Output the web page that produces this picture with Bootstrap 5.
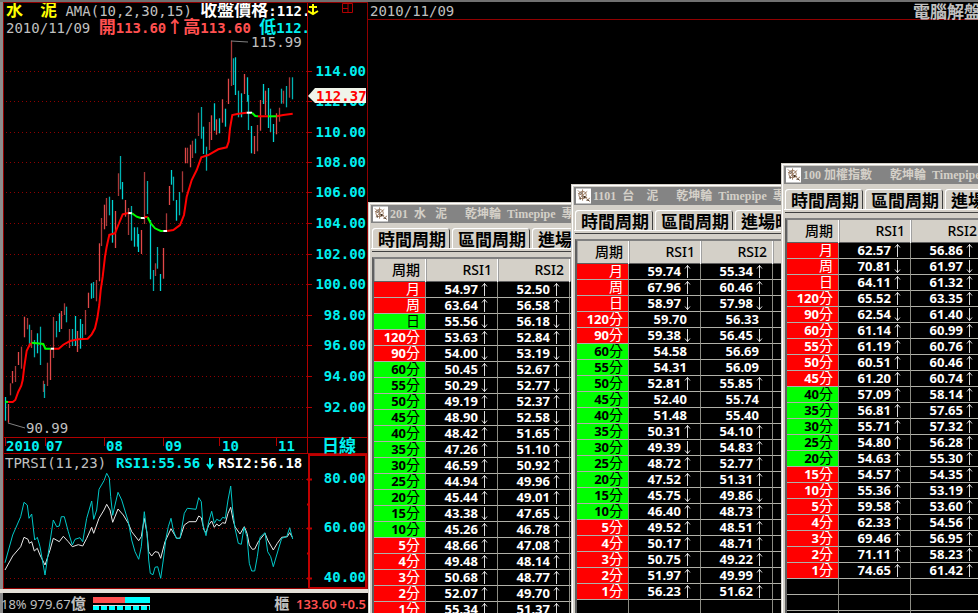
<!DOCTYPE html>
<html lang="zh-Hant">
<head>
<meta charset="utf-8">
<meta name="viewport" content="width=device-width, initial-scale=1">
<title>水泥 乾坤輪 Timepipe</title>
<link href="https://cdn.jsdelivr.net/npm/bootstrap@5.3.0/dist/css/bootstrap.min.css" rel="stylesheet">
<style>
  :root { --face: #d4d0c8; --wire: #900000; --aqua: #00f0f0; --coral: #ff5050; --mist: #c0c0c0; }
  body { background: #000; color: var(--mist); font: 14px/17px "DejaVu Sans Mono", "Noto Sans CJK TC", monospace; border-top: 2px solid #707070; }
  .zh { font: 700 17px/17px "Noto Sans CJK TC", sans-serif; }
  .quote-side { flex: 0 0 368px; border-left: 3px solid #8c8c8c; }
  .quote-side svg { display: block; }
  .quote-frame { border: 1px solid var(--wire); border-bottom: 0; }
  .quote-head { flex: 0 0 304px; border-right: 1px solid #b00000; padding-left: 2px; height: 34px; }
  .quote-head .zh { line-height: 12px; }
  .quote-head div { height: 17px; }
  .aqua { color: var(--aqua); } .coral { color: var(--coral); } .sun { color: #ff0; }
  .grid-line { stroke: #900000; stroke-dasharray: 1 3; fill: none; }
  .axis { stroke: #b00000; fill: none; }
  .lab { font-weight: 700; fill: var(--aqua); text-anchor: end; }
  .mon { font-weight: 700; fill: var(--aqua); }
  .tag { fill: #f00; }
  .splitter { height: 8px; background: linear-gradient(#e4e0d8 0 4px, #9a9a9a 4px 5px, #303030 5px 7px, #fff 7px); margin-left: -3px; }
  .status { font: 13px/18px "Noto Sans", "Noto Sans CJK TC", sans-serif; margin-left: -2px; padding: 0 2px 0 0; }
  .status > span { padding-top: 2px; }
  .status .zh { font-size: 15px; line-height: 12px; }
  .meter { flex: 0 0 57px; margin-left: 7px; height: 13px; }
  .meter-sell { flex: 0 0 32px; background: var(--coral); }
  .meter-buy { background: #0ff; }
  .meter-top { height: 6px; }
  .meter-ticks { height: 5px; margin-top: 2px; background: repeating-linear-gradient(90deg, #0ff 0 6px, #000 6px 8px); border-top: 1px solid #ddd; }
  .desk-head { border-bottom: 1px solid var(--wire); height: 18px; padding: 1px 0 0 2px; }
  .desk-head .zh { margin-right: -3px; line-height: 15px; }
  .tool-win { position: absolute; width: 460px; height: 600px; background: var(--face); border: 1px solid var(--face); box-shadow: inset 1px 1px #fff; padding: 2px 2px 0; font-family: "Noto Sans", "Noto Sans CJK TC", sans-serif; }
  .win-a { left: 0; top: 200px; } .win-b { left: 203px; top: 182px; } .win-c { left: 413px; top: 161px; }
  .win-title { height: 18px; background: #848484; color: var(--face); font: 700 12px/18px "Liberation Serif", "Noto Sans CJK TC", serif; padding-left: 2px; gap: 2px; }
  .win-title .who { margin-right: 16px; }
  .win-tabs { padding: 5px 0 0 1px; border-bottom: 1px solid #fff; margin-bottom: 3px; }
  .win-tabs button { border: 0; background: var(--face); color: #000; padding: 0 4px 0 6px; height: 20px; box-shadow: inset 1px 1px #fff, inset -1px 0 #404040; border-radius: 3px 3px 0 0; margin-right: 2px; }
  .win-body { border-top: 2px solid #808080; box-shadow: 0 -5px var(--face), 0 -6px #404040; margin-top: 8px; margin-left: 1px; border-left: 2px solid #606060; background: #000; }
  .rsi-grid { table-layout: fixed; width: 268px; border-collapse: separate; border-spacing: 0; color: #fff; margin: 0; font: 700 13px/15px "Noto Sans", "Noto Sans CJK TC", sans-serif; }
  .rsi-grid th, .rsi-grid td { padding: 0; text-align: right; }
  .rsi-grid thead th { background: var(--face); color: #000; height: 23px; font-size: 14px; font-weight: 500; padding: 0 5px 2px 0; border-right: 1px solid #fff; box-shadow: inset 0 -1px #606060, inset 1px 0 #a0a0a0; }
  .rsi-grid .unit { font-weight: 400; font-size: 14px; line-height: 8px; }
  .rsi-grid tbody th, .rsi-grid tbody td { height: 16px; border-bottom: 1px solid #b0b0a8; border-right: 1px solid #8c8c84; }
  .rsi-grid tbody th { padding-right: 5px; }
  .rsi-grid tbody td { padding-right: 9px; }
  .rsi-grid tbody .flat { padding-right: 13px; }
  .hot { background: #f00; color: #fff; } .calm { background: #0f0; color: #000; }
  .dir { display: inline-block; width: 9px; margin-left: 1px; height: 14px; vertical-align: top; }
</style>
</head>
<body class="vh-100 overflow-hidden d-flex">
<svg class="d-none">
  <symbol id="up" viewBox="0 0 9 14"><path d="M5.500 1V14M3 4.500L5.500 1.500L8 4.500" fill="none" stroke="#ddd"/></symbol>
  <symbol id="down" viewBox="0 0 9 14"><path d="M5.500 1V14M3 10.500L5.500 13.500L8 10.500" fill="none" stroke="#ddd"/></symbol>
  <symbol id="emblem" viewBox="0 0 16 16"><path fill="#fff" d="M0 0h16v16H0z"/><g fill="none" stroke="#9a7a60"><circle cx="7" cy="7" r="4"/><path d="M7 1v12M2 5l10 5M3 11l9-8M2 2l3 3M10 10l5 4M11 13l4-3"/></g><path fill="#403020" d="M5 4h1v2H5zM8 8h2v2H8zM4 10h1v2H4zM12 12h2v1h-2z"/></symbol>
</svg>

<aside class="quote-side d-flex flex-column">
  <section class="quote-frame">
    <div class="d-flex">
      <header class="quote-head text-nowrap overflow-hidden">
        <div><span class="zh sun">水　泥</span> AMA(10,2,30,15) <span class="zh text-white">收盤價格</span><b class="text-white">:112.</b></div>
        <div>2010/11/09 <span class="coral"><span class="zh">開</span><b>113.60</b><span class="zh">↑</span><span class="zh">高</span><b>113.60</b></span> <span class="aqua"><span class="zh">低</span><b>112.</b></span></div>
      </header>
      <svg width="58" height="14" viewBox="0 0 58 14"><path d="M5 1v10M1 4h8M0 8l5 3 5-3" stroke="#ff0" stroke-width="2" fill="none"/><path d="M34.500 .500h10v9h-10zM40 .500v9M34 5.500h6" stroke="#b00000" fill="none"/></svg>
    </div>
    <svg viewBox="4 37 363 417" role="img" aria-label="日線 K線圖">
      <g id="priceGrid"></g>
      <path class="axis" d="M307.500 37V454M4 437.500H367M4 453.500H367M5.500 438v8M45.500 438v8M104.500 438v8M163.500 438v8M219.500 438v8M276.500 438v8"/>
      <g id="candles"></g>
      <g id="average" fill="none" stroke-width="2"></g>
      <path d="M8 423L25 428M231 41L248 42" stroke="#808080" fill="none"/>
      <g fill="#c0c0c0"><text x="26" y="433">90.99</text><text x="251" y="47">115.99</text></g>
      <g class="mon"><text x="6" y="451">2010</text><text x="46" y="451">07</text><text x="106" y="451">08</text><text x="165" y="451">09</text><text x="222" y="451">10</text><text x="278" y="451">11</text><text class="zh" x="322" y="452">日線</text></g>
      <path d="M308 96L315 88H366V103H315Z" fill="#f0f5ea"/>
      <text class="tag fw-bold" x="316" y="101">112.37</text>
    </svg>
    <svg viewBox="4 454 363 135" role="img" aria-label="TPRSI">
      <path class="grid-line" d="M6 479.500H307M6 528.500H307M6 578.500H307"/>
      <path d="M309 455H366V588H309ZM307 479.500H312M307 528.500H312M307 578.500H312M307 504.500H310M307 553.500H310" stroke="#c00000" stroke-width="2" fill="none"/>
      <path d="M4 588.500H309" stroke="#900000"/>
      <g id="rsi" fill="none"></g>
      <text x="5" y="468" fill="#c0c0c0">TPRSI(11,23)</text>
      <text x="116" y="468" class="mon">RSI1:55.56</text>
      <path d="M210 458V467M207 464L210 468L213 464" stroke="#00f0f0" stroke-width="2" fill="none"/>
      <text x="218" y="468" fill="#fff" font-weight="700">RSI2:56.18</text>
      <g class="lab"><text x="366" y="483">80.00</text><text x="366" y="532">60.00</text><text x="366" y="582">40.00</text></g>
    </svg>
  </section>
  <div class="splitter"></div>
  <footer class="status d-flex align-items-start text-nowrap">
    <span>18% 979.67<span class="zh">億</span></span>
    <div class="meter mt-1"><div class="meter-top d-flex"><div class="meter-sell"></div><div class="meter-buy flex-fill"></div></div><div class="meter-ticks"></div></div>
    <span class="ms-auto"><span class="zh">櫃</span>&nbsp; <b class="coral fw-semibold">133.60 +0.5</b></span>
  </footer>
</aside>

<main class="flex-fill position-relative overflow-hidden">
  <div class="desk-head d-flex justify-content-between text-nowrap"><span>2010/11/09</span><span class="zh">電腦解盤</span></div>
  <div id="windows"></div>
</main>

<script src="https://cdn.jsdelivr.net/npm/bootstrap@5.3.0/dist/js/bootstrap.bundle.min.js"></script>
<script>
const periods = ['月','周','日','120分','90分','60分','55分','50分','45分','40分','35分','30分','25分','20分','15分','10分','5分','4分','3分','2分','1分'];
// Each reading is RSI1, RSI2, direction (one letter, or one per column): u rising, d falling, - unchanged.
const wins = [
 {cls:'win-a', who:'201 \u00a0水\u00a0\u00a0 泥', tone:'rrgrrgggggggggggrrrrr', v:
 '54.97 52.50 u,63.64 56.58 u,55.56 56.18 d,53.63 52.84 u,54.00 53.19 d,50.45 52.67 u,50.29 52.77 d,49.19 52.37 u,48.90 52.58 d,48.42 51.65 u,47.26 51.10 u,46.59 50.92 u,44.94 49.96 u,45.44 49.01 u,43.38 47.65 d,45.26 46.78 u,48.66 47.08 u,49.48 48.14 u,50.68 48.77 u,52.07 49.70 u,55.34 51.37 u'},
 {cls:'win-b', who:'1101 \u00a0台　泥', tone:'rrrrrgggggggggggrrrrr', v:
 '59.74 55.34 u,67.96 60.46 u,58.97 57.98 d,59.70 56.33 -,59.38 56.45 d,54.58 56.69 -,54.31 56.09 -,52.81 55.85 u,52.40 55.74 -,51.48 55.40 -,50.31 54.10 u,49.39 54.83 du,48.72 52.77 u,47.52 51.31 u,45.75 49.86 d,46.40 48.73 u,49.52 48.51 u,50.17 48.71 u,50.75 49.22 u,51.97 49.99 u,56.23 51.62 u'},
 {cls:'win-c', who:'100 加權指數', tone:'rrrrrrrrrgggggrrrrrrr', v:
 '62.57 56.86 u,70.81 61.97 d,64.11 61.32 u,65.52 63.35 u,62.54 61.40 d,61.14 60.99 u,61.19 60.76 u,60.51 60.46 u,61.20 60.74 u,57.09 58.14 u,56.81 57.65 u,55.71 57.32 u,54.80 56.28 u,54.63 55.30 u,54.57 54.35 u,55.36 53.19 u,59.58 53.60 u,62.33 54.56 u,69.46 56.95 u,71.11 58.23 u,74.65 61.42 u'}];
const cell = (n, d) => d === '-' ? `<td class="flat">${n}</td>` : `<td>${n}<svg class="dir"><use href="#${d === 'u' ? 'up' : 'down'}"/></svg></td>`;
document.getElementById('windows').innerHTML = wins.map(w => {
  const rows = w.v.split(',').map((r, i) => {
    const [a, b, d] = r.split(' ');
    return `<tr><th scope="row" class="${w.tone[i] === 'r' ? 'hot' : 'calm'}">${periods[i].replace(/[^\d]/, '<span class="unit">$&</span>')}</th>${cell(a, d[0])}${cell(b, d[d.length - 1])}<td></td></tr>`;
  }).join('') + '<tr><td></td><td></td><td></td><td></td></tr>'.repeat(3);
  return `<section class="tool-win ${w.cls} text-nowrap overflow-hidden">
    <div class="win-title d-flex align-items-center"><svg width="15" height="16"><use href="#emblem"/></svg><span class="who">${w.who}</span><span>乾坤輪&nbsp; Timepipe&nbsp; 專用</span></div>
    <div class="win-tabs d-flex"><button type="button" class="zh">時間周期</button><button type="button" class="zh">區間周期</button><button type="button" class="zh">進場時機</button></div>
    <div class="win-body"><table class="rsi-grid"><colgroup><col width="52"><col width="72"><col width="72"><col width="72"></colgroup>
    <thead><tr><th scope="col">周期</th><th scope="col">RSI1</th><th scope="col">RSI2</th><th></th></tr></thead><tbody>${rows}</tbody></table></div></section>`;
}).join('');

// Chart series are stored in thirds of a pixel.
const px = n => Math.round(n / 3 * 10) / 10;
const line = s => 'M' + s.split(' ').map(p => p.split(',').map(px).join(' ')).join('L');
const levels = [72,102,133,163,193,224,255,285,316,346,377,408];
document.getElementById('priceGrid').innerHTML = levels.map((y, i) =>
  `<path class="grid-line" d="M6 ${y - .5}H307"/><path class="axis" d="M307 ${y - .5}H312"/><text class="lab" x="366" y="${y + 4}">${114 - 2 * i}.00</text>`).join('');
const bars = 'c16,1191,1262 r24,1212,1268 r32,1150,1186 r38,1113,1150 r46,1098,1146 r55,1056,1095 r64,1040,1106 r72,950,1012 r81,954,988 c87,974,1040 r95,990,1044 c103,1020,1072 c112,1000,1060 c121,980,1095 r129,1142,1176 c134,1152,1194 r143,1088,1158 r152,1046,1140 r160,951,1074 c169,963,1012 c178,940,996 r183,933,987 r192,910,945 c200,920,967 r209,987,1044 c217,987,1038 c226,948,1038 r232,993,1056 c240,957,1046 c248,972,1016 r257,930,1004 r266,878,924 c275,850,896 c281,846,894 r289,840,904 r297,730,844 r305,654,738 r313,614,688 r320,594,678 c328,590,646 c337,600,728 r346,633,744 r354,520,588 c362,468,568 c368,546,598 r376,600,650 r386,624,705 c394,618,722 c403,682,740 c411,682,740 c416,702,756 r425,690,762 r433,516,672 c442,543,642 c450,660,838 c459,810,873 r465,790,828 c473,741,806 c482,822,873 r491,744,836 r499,640,692 r507,558,615 c513,510,554 c521,530,602 c530,600,662 c539,576,646 r548,514,576 r556,443,490 r562,443,490 r570,434,502 r578,422,474 c587,416,460 r596,338,408 c604,321,416 c611,380,462 c618,440,512 r627,366,450 r635,346,420 c643,310,392 r650,358,404 c659,355,400 r667,298,368 c675,326,380 r684,236,312 r693,122,258 c699,175,255 c707,172,285 c716,272,352 c724,280,352 r733,222,282 c741,232,305 c746,285,390 c755,378,460 r764,408,462 r773,375,454 r781,300,392 c789,252,312 r796,272,345 c804,264,384 c812,326,396 c821,372,426 r829,340,403 r837,323,365 c843,266,311 r851,272,311 c860,258,322 r869,232,293 c878,232,298';
document.getElementById('candles').innerHTML = bars.split(' ').map((b, i) => {
  const [x, y1, y2] = b.slice(1).split(',').map(Number);
  const ink = b[0] === 'c' ? (i % 2 ? '#00b0b0' : '#00d4d4') : (i % 2 ? '#e04848' : '#a83838');
  return `<path d="M${Math.floor(x / 3) + .5} ${px(y1)}V${px(y2)}" stroke="${ink}" stroke-width="1.300"/>`;
}).join('');
const avg = [['#0f0','16,1205 24,1206'],['#f00','24,1206 38,1206 46,1200 55,1175 64,1157 68,1140 73,1100 80,1052 90,1032 95,1030'],['#0f0','95,1028 130,1032 136,1046 152,1046'],['#fff','152,1046 162,1046'],['#f00','162,1046 176,1046 190,1034 210,1023 235,1018 263,1016 275,1003 285,985 292,955 298,915 302,870 308,830 315,770 320,740 328,704 345,700 355,675 368,643 385,639'],['#fff','385,639 396,640'],['#0f0','396,640 410,650 422,654'],['#fff','422,654 434,654'],['#f00','434,651 443,651'],['#0f0','443,652 452,670 465,685 482,693 490,693'],['#fff','490,693 502,693'],['#f00','502,693 520,690 540,675 552,645 560,590 575,540 590,510 604,472 625,465 655,448 680,442 686,425 690,385 697,345 715,341 740,338'],['#fff','740,338 756,338'],['#0f0','756,338 766,348 774,349'],['#f00','774,349 804,349'],['#0f0','804,349 830,349'],['#f00','830,349 850,345 878,341']];
document.getElementById('average').innerHTML = avg.map(([c, s]) => `<path stroke="${c}" d="${line(s)}"/>`).join('');
const rsi = [['#e8e8e8','15,360 38,318 62,290 72,262 84,268 88,280 95,275 103,303 112,295 120,315 135,345 150,300 160,265 178,275 190,259 205,275 217,290 235,284 248,288 260,265 275,232 281,250 297,205 312,180 320,163 330,180 338,217 354,177 370,195 385,220 395,245 416,272 424,260 433,205 441,250 446,305 455,318 465,305 475,307 482,325 495,275 513,236 530,265 540,265 553,225 567,215 588,215 596,198 604,203 612,240 618,248 626,225 635,213 643,232 650,222 657,228 668,218 676,220 684,190 692,172 700,212 705,230 720,252 733,230 741,250 748,285 757,298 764,297 775,275 795,250 803,270 820,300 832,280 845,262 862,260 869,248 877,262'],['#00c8c8','15,338 38,255 62,200 72,157 82,165 87,205 95,192 104,270 112,262 120,290 135,375 160,210 170,230 178,228 184,200 193,200 205,245 217,285 225,268 240,263 248,275 260,205 275,153 281,208 290,180 297,118 312,92 320,70 328,84 332,140 338,196 345,165 354,127 365,150 385,215 395,270 405,305 416,328 424,290 433,185 441,250 446,330 451,370 459,374 465,352 473,350 482,385 490,330 498,265 505,230 513,205 520,240 529,265 540,265 553,190 562,175 588,178 596,143 604,155 609,225 618,257 626,215 635,184 643,220 650,208 660,213 668,202 676,205 684,150 692,108 698,180 705,235 715,280 724,283 732,232 741,260 748,340 755,363 764,363 772,320 780,262 795,248 803,305 812,320 820,350 830,315 845,265 860,260 869,233 878,267']];
document.getElementById('rsi').innerHTML = rsi.map(([c, s]) => `<path stroke="${c}" transform="translate(0 450)" d="${line(s)}"/>`).join('');
</script>
</body>
</html>
